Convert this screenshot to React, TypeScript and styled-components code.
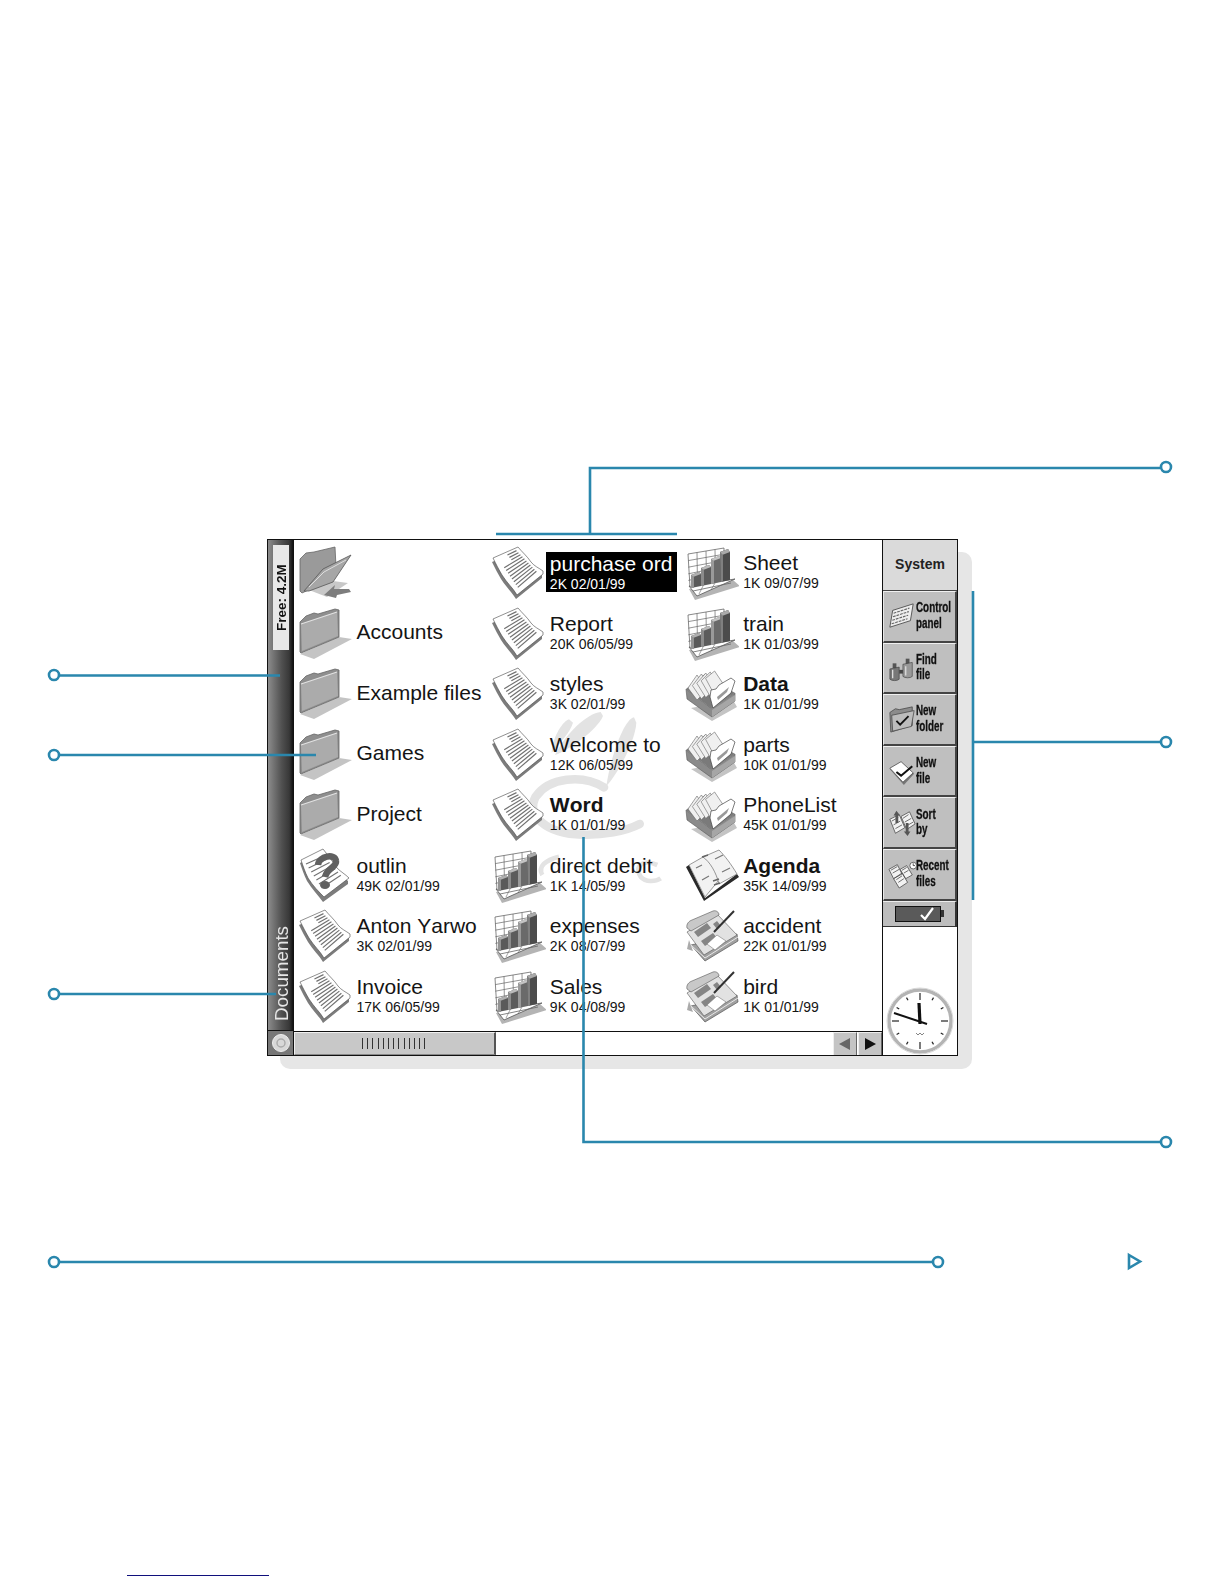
import React, { FC, ReactNode } from 'react'
import styled, { createGlobalStyle } from 'styled-components'

const GlobalStyle = createGlobalStyle`
  html, body {
    margin: 0;
    padding: 0;
    background: #fff;
    font-family: 'Liberation Sans', Arial, sans-serif;
    font-kerning: none;
  }
`

const accent = '#2a87ad'
const ink = '#141414'

/* ---------- file icons ---------- */

const IconSvg: FC<{ children: ReactNode }> = ({ children }) => (
  <Icon viewBox="0 0 56 56">{children}</Icon>
)

const FolderIcon: FC = () => (
  <IconSvg>
    <path d="M42 31 L55 33 L17 53 L3 48Z" fill="#c4c4c4" />
    <path d="M3 16 L9 10 L17 7 L21 8 L38 3 L42 4 L42 31 L4 47 L3 46Z" fill="#8e8e8e" stroke="#666" strokeWidth=".8" />
    <path d="M4 18 L40 6 L41 30 L5 45Z" fill="#ababab" />
    <path d="M4 18 L40 6" stroke="#e2e2e2" strokeWidth="1.2" />
  </IconSvg>
)

const OpenFolderIcon: FC = () => (
  <IconSvg>
    <path d="M12 45 L36 36 L51 38 L30 52Z" fill="#c8c8c8" />
    <path d="M3 14 L9 8 L17 7 L38 2 L39 22 L22 40 L5 48 L3 46Z" fill="#9a9a9a" stroke="#666" strokeWidth=".8" />
    <path d="M7 46 L26 24 L54 10 L36 37 L12 46Z" fill="#a6a6a6" stroke="#555" strokeWidth=".8" />
    <path d="M12 42 L27 27 L49 15" stroke="#dedede" strokeWidth="1" fill="none" />
    <path d="M27 50 L38 40 L37 44 L52 44 L54 47 L40 50 L39 53Z" fill="#7d7d7d" />
  </IconSvg>
)

const pageOutline = 'M3 13 L28 2 C32 7 37 11 41 17 C44 21 49 23 53 26 L53 29 L27 50 C23 43 17 38 12 30 C9 25 6 19 3 13Z'

const textLines = Array.from({ length: 11 }, (_, i) => (i + 1) / 12.5)

const DocIcon: FC = () => (
  <IconSvg>
    <path d={pageOutline} fill="#7c7c7c" transform="translate(-1 4)" />
    <path d={pageOutline} fill="#fff" stroke="#444" strokeWidth=".6" />
    {textLines.map((t, i) => {
      const lx = 3 + 24 * t
      const ly = 13 + 37 * t
      const rx = 28 + 25 * t
      const ry = 2 + 24 * t
      const from = i < 3 ? 0.5 : 0.14
      return (
        <line
          key={t}
          x1={lx + (rx - lx) * from}
          y1={ly + (ry - ly) * from}
          x2={lx + (rx - lx) * 0.86}
          y2={ly + (ry - ly) * 0.86}
          stroke="#707070"
          strokeWidth="1.2"
        />
      )
    })}
  </IconSvg>
)

const HelpDocIcon: FC = () => (
  <IconSvg>
    <path d="M4 12 L26 1 C30 6 36 14 40 20 C44 24 48 26 52 30 L52 33 L27 51 C22 44 16 38 11 30 C8 24 6 18 4 12Z" fill="#7c7c7c" transform="translate(-1 3)" />
    <path d="M4 12 L26 1 C30 6 36 14 40 20 C44 24 48 26 52 30 L27 49 C22 44 16 38 11 30 C8 24 6 18 4 12Z" fill="#fff" stroke="#444" strokeWidth=".6" />
    {[0, 1, 2, 3, 4, 5, 6].map(i => (
      <line key={i} x1={9 + i * 2.6} y1={16 + i * 4} x2={27 + i * 2.8} y2={8 + i * 3.2} stroke="#707070" strokeWidth="1.1" />
    ))}
    <path d="M21 17 C22 8 38 5 39 13 C40 19 30 20 28 29" fill="none" stroke="#606060" strokeWidth="6.5" />
    <ellipse cx="28" cy="37" rx="5" ry="4" fill="#606060" />
  </IconSvg>
)

const ChartIcon: FC = () => (
  <IconSvg>
    <path d="M12 55 L57 41 L50 35 L6 44Z" fill="#b4b4b4" />
    <path d="M6 41 L52 34 L14 51Z" fill="#fff" stroke="#555" strokeWidth=".8" />
    <path d="M5 9 L41 3 L41 34 L7 42Z" fill="#fff" stroke="#555" strokeWidth=".7" />
    {[1, 2, 3].map(i => (
      <line key={i} x1={5 + i * 9} y1={9 - i * 1.5} x2={5.5 + i * 9} y2={42 - i * 2} stroke="#666" strokeWidth=".7" />
    ))}
    {[1, 2, 3, 4].map(i => (
      <line key={i} x1={5.3} y1={9 + i * 6.6} x2={41} y2={3 + i * 6.2} stroke="#666" strokeWidth=".7" />
    ))}
    <path d="M8 30 L16 27 L18 29 L18 41 L8 43Z" fill="#5a5a5a" />
    <path d="M8 30 L16 27 L18 29 L10 32Z" fill="#b0b0b0" />
    <path d="M8 30 L11 32 L11 43 L8 43Z" fill="#949494" />
    <path d="M18 23 L26 20 L28 22 L28 39 L18 41Z" fill="#5c5c5c" />
    <path d="M18 23 L26 20 L28 22 L20 25Z" fill="#bbb" />
    <path d="M18 23 L21 25 L21 41 L18 41Z" fill="#8c8c8c" />
    <path d="M28 14 L36 11 L38 13 L38 37 L28 39Z" fill="#6a6a6a" />
    <path d="M28 14 L36 11 L38 13 L30 16Z" fill="#c4c4c4" />
    <path d="M28 14 L31 16 L31 39 L28 39Z" fill="#9a9a9a" />
    <path d="M37 7 L45 4 L47 7 L47 35 L38 37Z" fill="#4c4c4c" />
    <path d="M37 7 L45 4 L47 7 L39 10Z" fill="#aaa" />
    <path d="M37 7 L40 10 L40 37 L38 37Z" fill="#808080" />
    <line x1="10" y1="46" x2="48" y2="38" stroke="#666" strokeWidth=".8" />
    <line x1="20" y1="41" x2="16" y2="49" stroke="#666" strokeWidth=".6" />
    <line x1="32" y1="38" x2="28" y2="45" stroke="#666" strokeWidth=".6" />
  </IconSvg>
)

const CardBoxIcon: FC = () => (
  <IconSvg>
    <path d="M8 42 L29 55 L54 41 L50 34Z" fill="#c4c4c4" />
    <path d="M3 23 L28 42 L52 27 L52 35 L29 51 L4 33Z" fill="#8a8a8a" stroke="#555" strokeWidth=".6" />
    <path d="M29 44 L52 29 L52 35 L29 51Z" fill="#a6a6a6" />
    <path d="M3 23 L22 8 L52 27 L28 42Z" fill="#7a7a7a" />
    {[0, 1, 2, 3, 4].map(i => (
      <path
        key={i}
        d={`M${5 + i * 4.4} ${22 - i * 2.4} L${14 + i * 4.4} ${9 - i * 1} L${24 + i * 4.4} ${24 - i * 1} L${14 + i * 4.4} ${34 - i * 1.2}Z`}
        fill="#f0f0f0"
        stroke="#666"
        strokeWidth=".6"
      />
    ))}
    <path d="M27 31 L28 24 L33 23 L36 19 L48 12 L52 15 L48 27 L30 42Z" fill="#fff" stroke="#444" strokeWidth=".7" />
    <path d="M34 31 L46 21 L44 26 L35 34Z" fill="#999" />
  </IconSvg>
)

const AgendaIcon: FC = () => (
  <IconSvg>
    <path d="M3 19 L21 53 L56 29 L54 26 L22 50 L6 17Z" fill="#2a2a2a" />
    <path d="M6 17 L20 9 C26 7 32 14 36 32 L22 49Z" fill="#f2f2f2" stroke="#555" strokeWidth=".6" />
    <path d="M20 9 L36 2 C42 8 48 16 54 26 L36 36 C33 24 27 14 20 9Z" fill="#f2f2f2" stroke="#555" strokeWidth=".6" />
    <path d="M13 20 L19 17 M19 32 L26 28 M32 11 L40 7 M39 24 L47 20" stroke="#777" strokeWidth="1.2" />
    <path d="M19 9 L25 7 M30 33 L36 31 M31 37 L37 35" stroke="#666" strokeWidth="1.5" />
  </IconSvg>
)

const CalendarIcon: FC = () => (
  <IconSvg>
    <path d="M8 37 L22 53 L55 33 L54 26Z" fill="#a0a0a0" stroke="#555" strokeWidth=".7" />
    <path d="M8 37 L22 50 L55 29" fill="none" stroke="#e8e8e8" strokeWidth="1" />
    <path d="M4 24 L34 6 L54 27 L21 47Z" fill="#e2e2e2" stroke="#555" strokeWidth=".6" />
    <path d="M4 20 C3 16 6 13 9 12 L30 3 C33 2 36 4 36 7 L8 23Z" fill="#c8c8c8" stroke="#555" strokeWidth=".6" />
    <path d="M11 24 L24 15 L28 20 L15 29Z M18 33 L30 25 L34 30 L22 38Z M30 16 L34 13 L38 18 L34 21Z" fill="#858585" />
    <path d="M24 36 L34 27 L43 33 L32 42Z" fill="#fff" stroke="#777" strokeWidth=".6" />
    <path d="M51 3 L31 24" stroke="#333" strokeWidth="2" />
    <path d="M6 32 L4 41 L10 43Z" fill="#aaa" />
  </IconSvg>
)

/* ---------- toolbar icons ---------- */

const ToolSvg = ({ children }: { children: ReactNode }) => <ToolIcon viewBox="0 0 30 30">{children}</ToolIcon>

const ControlPanelIcon: FC = () => (
  <ToolSvg>
    <path d="M5 9 L27 2 L24 20 L2 27Z" fill="#eee" stroke="#444" strokeWidth=".9" />
    {[0, 1, 2, 3].map(i => (
      <line key={i} x1={6 - i * 0.7} y1={12 + i * 3.8} x2={23 - i * 0.7} y2={6.5 + i * 3.8} stroke="#666" strokeWidth="1.2" strokeDasharray="3 1" />
    ))}
  </ToolSvg>
)

const FindFileIcon: FC = () => (
  <ToolSvg>
    <rect x="5" y="10" width="4" height="5" fill="#555" />
    <rect x="19" y="5" width="4" height="6" fill="#555" />
    <path d="M2 16 L12 14 L12 27 C10 29 4 29 2 27Z" fill="#777" stroke="#333" strokeWidth=".6" />
    <path d="M16 11 L26 9 L26 24 C24 26 18 26 16 24Z" fill="#999" stroke="#333" strokeWidth=".6" />
    <path d="M5 17 L5 26 M19 13 L19 23" stroke="#ddd" strokeWidth="1.4" />
    <rect x="12" y="17" width="4" height="4" fill="#444" />
  </ToolSvg>
)

const NewFolderIcon: FC = () => (
  <ToolSvg>
    <path d="M2 8 L8 4 L12 5 L26 2 L26 22 L3 29Z" fill="#8c8c8c" stroke="#444" strokeWidth=".8" />
    <path d="M4 11 L28 6 L25 23 L5 28Z" fill="#bcbcbc" stroke="#444" strokeWidth=".8" />
    <path d="M9 17 L13 21 L22 12" fill="none" stroke="#111" strokeWidth="2" />
  </ToolSvg>
)

const NewFileIcon: FC = () => (
  <ToolSvg>
    <path d="M2 12 L14 5 L28 17 L17 29Z" fill="#777" transform="translate(0 1)" />
    <path d="M2 12 L14 5 L27 17 L16 27Z" fill="#fff" stroke="#444" strokeWidth=".8" />
    <path d="M9 16 L14 20 L26 10" fill="none" stroke="#111" strokeWidth="2.2" />
  </ToolSvg>
)

const SortIcon: FC = () => (
  <ToolSvg>
    <path d="M2 11 L12 6 L18 20 L8 26Z" fill="#f2f2f2" stroke="#444" strokeWidth=".8" />
    <path d="M14 8 L23 3 L29 16 L20 22Z" fill="#f2f2f2" stroke="#444" strokeWidth=".8" />
    <path d="M4 13 L11 9 M6 17 L13 13 M8 21 L15 17 M16 10 L22 6 M18 14 L25 10 M20 18 L27 14" stroke="#666" strokeWidth="1" />
    <path d="M9 2 L13 7 L11 7 L11 15 L8 15 L8 7 L6 7Z" fill="#555" />
    <path d="M21 29 L17 24 L19 24 L19 15 L22 15 L22 24 L24 24Z" fill="#555" />
  </ToolSvg>
)

const RecentIcon: FC = () => (
  <ToolSvg>
    <path d="M1 10 L10 5 L15 15 L6 20Z M6 20 L15 14 L21 24 L12 30Z M13 10 L20 6 L26 16 L19 20Z" fill="#f2f2f2" stroke="#444" strokeWidth=".8" />
    <path d="M3 11 L10 7 M5 14 L12 10 M9 21 L15 17 M11 24 L17 20 M15 11 L20 8 M17 14 L22 11" stroke="#666" strokeWidth="1" />
    <circle cx="27" cy="6" r="3.6" fill="#fff" stroke="#555" strokeWidth=".9" />
    <path d="M27 3.5 L27 6 L29 6" stroke="#222" strokeWidth=".8" fill="none" />
  </ToolSvg>
)

/* ---------- data ---------- */

type FileEntry = { icon: FC; name?: string; info?: string; bold?: boolean; selected?: boolean }

const files: FileEntry[] = [
  { icon: OpenFolderIcon },
  { icon: FolderIcon, name: 'Accounts' },
  { icon: FolderIcon, name: 'Example files' },
  { icon: FolderIcon, name: 'Games' },
  { icon: FolderIcon, name: 'Project' },
  { icon: HelpDocIcon, name: 'outlin', info: '49K 02/01/99' },
  { icon: DocIcon, name: 'Anton Yarwo', info: '3K 02/01/99' },
  { icon: DocIcon, name: 'Invoice', info: '17K 06/05/99' },

  { icon: DocIcon, name: 'purchase ord', info: '2K 02/01/99', selected: true },
  { icon: DocIcon, name: 'Report', info: '20K 06/05/99' },
  { icon: DocIcon, name: 'styles', info: '3K 02/01/99' },
  { icon: DocIcon, name: 'Welcome to', info: '12K 06/05/99' },
  { icon: DocIcon, name: 'Word', info: '1K 01/01/99', bold: true },
  { icon: ChartIcon, name: 'direct debit', info: '1K 14/05/99' },
  { icon: ChartIcon, name: 'expenses', info: '2K 08/07/99' },
  { icon: ChartIcon, name: 'Sales', info: '9K 04/08/99' },

  { icon: ChartIcon, name: 'Sheet', info: '1K 09/07/99' },
  { icon: ChartIcon, name: 'train', info: '1K 01/03/99' },
  { icon: CardBoxIcon, name: 'Data', info: '1K 01/01/99', bold: true },
  { icon: CardBoxIcon, name: 'parts', info: '10K 01/01/99' },
  { icon: CardBoxIcon, name: 'PhoneList', info: '45K 01/01/99' },
  { icon: AgendaIcon, name: 'Agenda', info: '35K 14/09/99', bold: true },
  { icon: CalendarIcon, name: 'accident', info: '22K 01/01/99' },
  { icon: CalendarIcon, name: 'bird', info: '1K 01/01/99' },
]

const tools: { icon: FC; lines: [string, string] }[] = [
  { icon: ControlPanelIcon, lines: ['Control', 'panel'] },
  { icon: FindFileIcon, lines: ['Find', 'file'] },
  { icon: NewFolderIcon, lines: ['New', 'folder'] },
  { icon: NewFileIcon, lines: ['New', 'file'] },
  { icon: SortIcon, lines: ['Sort', 'by'] },
  { icon: RecentIcon, lines: ['Recent', 'files'] },
]

/* ---------- drawings ---------- */

const Watermark: FC = () => (
  <WatermarkSvg viewBox="0 0 480 600">
    <g fill="#e3e3e3">
      <path d="M245 36 C205 40 140 100 108 165 C150 150 235 90 252 48Z" />
      <path d="M150 58 C125 68 100 120 98 158 C118 135 155 95 162 68Z" />
      <path d="M345 52 C315 58 275 170 262 258 C295 225 350 120 352 68Z" />
    </g>
    <g fill="none" stroke="#e3e3e3">
      <path d="M255 262 C190 222 90 232 50 290 C20 345 80 402 190 404 C250 406 320 394 362 372" strokeWidth="26" strokeLinecap="round" />
      <path d="M120 470 C80 480 55 500 70 525" strokeWidth="14" />
      <path d="M415 495 C370 475 345 500 365 530 C380 548 410 545 425 535" strokeWidth="14" />
    </g>
  </WatermarkSvg>
)

const Leaders: FC = () => (
  <LeaderSvg viewBox="0 0 1224 1584">
    <g fill="none" stroke={accent} strokeWidth="2.6">
      <path d="M496 534 H677 M590 534 V468 H1160" />
      <path d="M973 591 V900 M973 742 H1160" />
      <path d="M583.5 837 V1142 H1160" />
      <path d="M59 675.5 H280 M59 755 H316 M59 994 H276" />
      <path d="M59 1262 H933" />
    </g>
    <g fill="#fff" stroke={accent} strokeWidth="2.6">
      <circle cx="1166" cy="467" r="5" />
      <circle cx="1166" cy="742" r="5" />
      <circle cx="1166" cy="1142" r="5" />
      <circle cx="54" cy="675" r="5" />
      <circle cx="54" cy="755" r="5" />
      <circle cx="54" cy="994" r="5" />
      <circle cx="54" cy="1262" r="5" />
      <circle cx="938" cy="1262" r="5" />
      <path d="M1129 1255 L1140 1261.5 L1129 1268Z" />
    </g>
    <line x1="127" y1="1575.5" x2="269" y2="1575.5" stroke="#10107c" strokeWidth="1" />
  </LeaderSvg>
)

const tickAngles = Array.from({ length: 12 }, (_, i) => i * 30)

const Clock: FC = () => (
  <ClockFace viewBox="0 0 70 70">
    <circle cx="35" cy="35" r="31" fill="#fff" stroke="#b4b4b4" strokeWidth="3.4" />
    <circle cx="35" cy="35" r="33" fill="none" stroke="#d8d8d8" strokeWidth="1" />
    {tickAngles.map(a => (
      <line
        key={a}
        x1="35"
        y1={a % 90 === 0 ? 7 : 8}
        x2="35"
        y2={a % 90 === 0 ? 14 : 11}
        stroke="#222"
        strokeWidth="1.2"
        transform={`rotate(${a} 35 35)`}
      />
    ))}
    <line x1="35" y1="38" x2="34" y2="17" stroke="#111" strokeWidth="3.2" />
    <line x1="42" y1="38" x2="9" y2="27" stroke="#111" strokeWidth="2" />
    <path d="M31 47 L33 49 L35 47 L37 49 L39 47" fill="none" stroke="#666" strokeWidth=".8" />
  </ClockFace>
)

/* ---------- page ---------- */

const App: FC = () => (
  <Page>
    <GlobalStyle />
    <Device>
      <Rail>
        <FreeBox>Free: 4.2M</FreeBox>
        <RailTitle>Documents</RailTitle>
        <RailCorner>
          <svg width="20" height="20" viewBox="0 0 20 20">
            <circle cx="10" cy="10" r="8.5" fill="#d8d8d8" stroke="#eee" strokeWidth="1" />
            <circle cx="10" cy="10" r="4" fill="none" stroke="#aaa" strokeWidth="1.4" />
          </svg>
        </RailCorner>
      </Rail>

      <Main>
        <FileGrid>
          <Watermark />
          {files.map((file, i) => (
            <FileCell key={i}>
              <file.icon />
              {file.name && (
                <FileText $selected={file.selected}>
                  <FileName $bold={file.bold}>{file.name}</FileName>
                  {file.info && <FileInfo>{file.info}</FileInfo>}
                </FileText>
              )}
            </FileCell>
          ))}
        </FileGrid>
        <ScrollBar>
          <ScrollThumb>
            <ThumbRidges />
          </ScrollThumb>
          <ArrowButton>
            <Arrow $dir="left" />
          </ArrowButton>
          <ArrowButton>
            <Arrow $dir="right" />
          </ArrowButton>
        </ScrollBar>
      </Main>

      <Toolbar>
        <SystemButton>System</SystemButton>
        {tools.map(tool => (
          <ToolButton key={tool.lines[0] + tool.lines[1]}>
            <tool.icon />
            <ToolLabel>
              <span>{tool.lines[0]}</span>
              <span>{tool.lines[1]}</span>
            </ToolLabel>
          </ToolButton>
        ))}
        <BatteryRow>
          <Battery>
            <svg width="18" height="14" viewBox="0 0 18 14">
              <path d="M3 8 L7 12 L15 1" fill="none" stroke="#fff" strokeWidth="2.2" />
            </svg>
          </Battery>
          <BatteryNub />
        </BatteryRow>
        <ClockArea>
          <Clock />
        </ClockArea>
      </Toolbar>
    </Device>
    <Leaders />
  </Page>
)

export default App

const Page = styled.div`
  position: relative;
  width: 1224px;
  height: 1584px;
  padding: 539px 0 0 267px;
  box-sizing: border-box;
  overflow: hidden;
  isolation: isolate;
`

const Device = styled.div`
  position: relative;
  display: flex;
  width: 691px;
  height: 517px;
  box-sizing: border-box;
  border: 1.5px solid #111;
  background: #fff;

  &::before {
    content: '';
    position: absolute;
    z-index: -1;
    top: 12px;
    left: 12px;
    right: -15px;
    bottom: -14px;
    background: #e6e6e6;
    border-radius: 10px;
  }
`

const Rail = styled.div`
  display: flex;
  flex-direction: column;
  align-items: center;
  width: 25px;
  flex-shrink: 0;
  background: linear-gradient(90deg, #8c8c8c 0, #747474 22%, #505050 55%, #383838 85%, #111 100%);
`

const FreeBox = styled.div`
  writing-mode: vertical-rl;
  transform: rotate(180deg);
  display: flex;
  align-items: center;
  justify-content: center;
  box-sizing: border-box;
  width: 16px;
  height: 105px;
  margin-top: 5px;
  background: #e8e8e8;
  color: #111;
  font-size: 13.5px;
  font-weight: 700;
  white-space: nowrap;
`

const RailTitle = styled.div`
  margin-top: auto;
  margin-bottom: 9px;
  margin-left: 3px;
  writing-mode: vertical-rl;
  transform: rotate(180deg);
  color: #e6e6e6;
  font-size: 18.8px;
  line-height: 24px;
  white-space: nowrap;
`

const RailCorner = styled.div`
  display: flex;
  align-items: center;
  justify-content: center;
  width: 25px;
  height: 24px;
  flex-shrink: 0;
  background: #777;
  border-top: 1px solid #111;
`

const Main = styled.div`
  display: flex;
  flex-direction: column;
  flex: 1;
  min-width: 0;
  border-left: 1px solid #111;
`

const FileGrid = styled.div`
  position: relative;
  display: grid;
  grid-template-columns: repeat(3, 193.35px);
  grid-template-rows: repeat(8, 60.5px);
  grid-auto-flow: column;
  flex: 1;
  padding: 5px 0 0 2.5px;
  overflow: hidden;
`

const WatermarkSvg = styled.svg`
  position: absolute;
  left: 225px;
  top: 160px;
  width: 160px;
  height: 200px;
`

const FileCell = styled.div`
  position: relative;
  display: flex;
  align-items: center;
  gap: 4px;
`

const Icon = styled.svg`
  width: 56px;
  height: 56px;
  flex-shrink: 0;
  align-self: flex-start;
  filter: blur(0.35px);
`

const FileText = styled.div<{ $selected?: boolean }>`
  display: flex;
  flex-direction: column;
  margin-bottom: 7px;
  color: ${p => (p.$selected ? '#fff' : ink)};
  background: ${p => (p.$selected ? '#000' : 'transparent')};
  ${p => p.$selected && 'margin-left: -4px; padding: 1px 4px 0; width: 123px;'}
`

const FileName = styled.div<{ $bold?: boolean }>`
  font-size: 21px;
  line-height: 22px;
  font-weight: ${p => (p.$bold ? 700 : 400)};
  white-space: nowrap;
`

const FileInfo = styled.div`
  margin-top: 1px;
  font-size: 14px;
  line-height: 16px;
  white-space: nowrap;
`

const ScrollBar = styled.div`
  display: flex;
  align-items: stretch;
  height: 24px;
  flex-shrink: 0;
  border-top: 1px solid #111;
  box-sizing: border-box;
`

const ScrollThumb = styled.div`
  display: flex;
  align-items: center;
  justify-content: center;
  width: 202px;
  margin-right: auto;
  background: #c8c8c8;
  border-top: 1px solid #f0f0f0;
  border-left: 1px solid #f0f0f0;
  border-right: 2px solid #555;
  border-bottom: 1px solid #888;
  box-sizing: border-box;
`

const ThumbRidges = styled.div`
  width: 66px;
  height: 11px;
  background: repeating-linear-gradient(90deg, #333 0 1px, transparent 1px 5.2px);
`

const ArrowButton = styled.div`
  display: flex;
  align-items: center;
  justify-content: center;
  width: 24px;
  margin-left: 1.5px;
  background: #c4c4c4;
  border-top: 1px solid #eee;
  border-left: 1px solid #eee;
  border-right: 1px solid #666;
  box-sizing: border-box;
`

const Arrow = styled.div<{ $dir: 'left' | 'right' }>`
  width: 0;
  height: 0;
  border-top: 6px solid transparent;
  border-bottom: 6px solid transparent;
  ${p =>
    p.$dir === 'left' ? 'border-right: 11px solid #666;' : 'border-left: 11px solid #111;'}
`

const Toolbar = styled.div`
  display: flex;
  flex-direction: column;
  width: 74px;
  flex-shrink: 0;
  border-left: 1px solid #111;
`

const SystemButton = styled.div`
  display: flex;
  align-items: center;
  justify-content: center;
  height: 51px;
  flex-shrink: 0;
  box-sizing: border-box;
  padding-bottom: 3px;
  background: #dadada;
  border-bottom: 1px solid #444;
  color: #222;
  font-size: 14px;
  font-weight: 700;
`

const ToolButton = styled.div`
  display: flex;
  align-items: center;
  height: 51.6px;
  flex-shrink: 0;
  box-sizing: border-box;
  padding-left: 4px;
  background: #bfbfbf;
  border-top: 1px solid #f0f0f0;
  border-left: 1px solid #e8e8e8;
  border-right: 2px solid #444;
  border-bottom: 2px solid #444;
`

const ToolIcon = styled.svg`
  width: 28px;
  height: 30px;
  flex-shrink: 0;
  filter: blur(0.25px);
`

const ToolLabel = styled.div`
  display: flex;
  flex-direction: column;
  margin-bottom: 1px;
  color: #111;
  font-size: 14.5px;
  line-height: 15.5px;
  font-weight: 700;
  -webkit-text-stroke: 0.3px #111;
  white-space: nowrap;
  transform: scaleX(0.68);
  transform-origin: left center;
`

const BatteryRow = styled.div`
  display: flex;
  align-items: center;
  justify-content: center;
  height: 26px;
  flex-shrink: 0;
  box-sizing: border-box;
  background: #bdbdbd;
  border-top: 1px solid #eee;
  border-right: 2px solid #333;
  border-bottom: 1px solid #333;
`

const Battery = styled.div`
  display: flex;
  align-items: center;
  justify-content: flex-end;
  width: 46px;
  height: 16px;
  box-sizing: border-box;
  padding-right: 4px;
  background: #5a5a5a;
  border: 1px solid #111;
`

const BatteryNub = styled.div`
  width: 3px;
  height: 7px;
  background: #333;
`

const ClockArea = styled.div`
  display: flex;
  align-items: flex-end;
  justify-content: center;
  flex: 1;
  background: #fff;
`

const ClockFace = styled.svg`
  width: 70px;
  height: 70px;
  margin-bottom: -1px;
`

const LeaderSvg = styled.svg`
  position: absolute;
  top: 0;
  left: 0;
  width: 1224px;
  height: 1584px;
  pointer-events: none;
`
